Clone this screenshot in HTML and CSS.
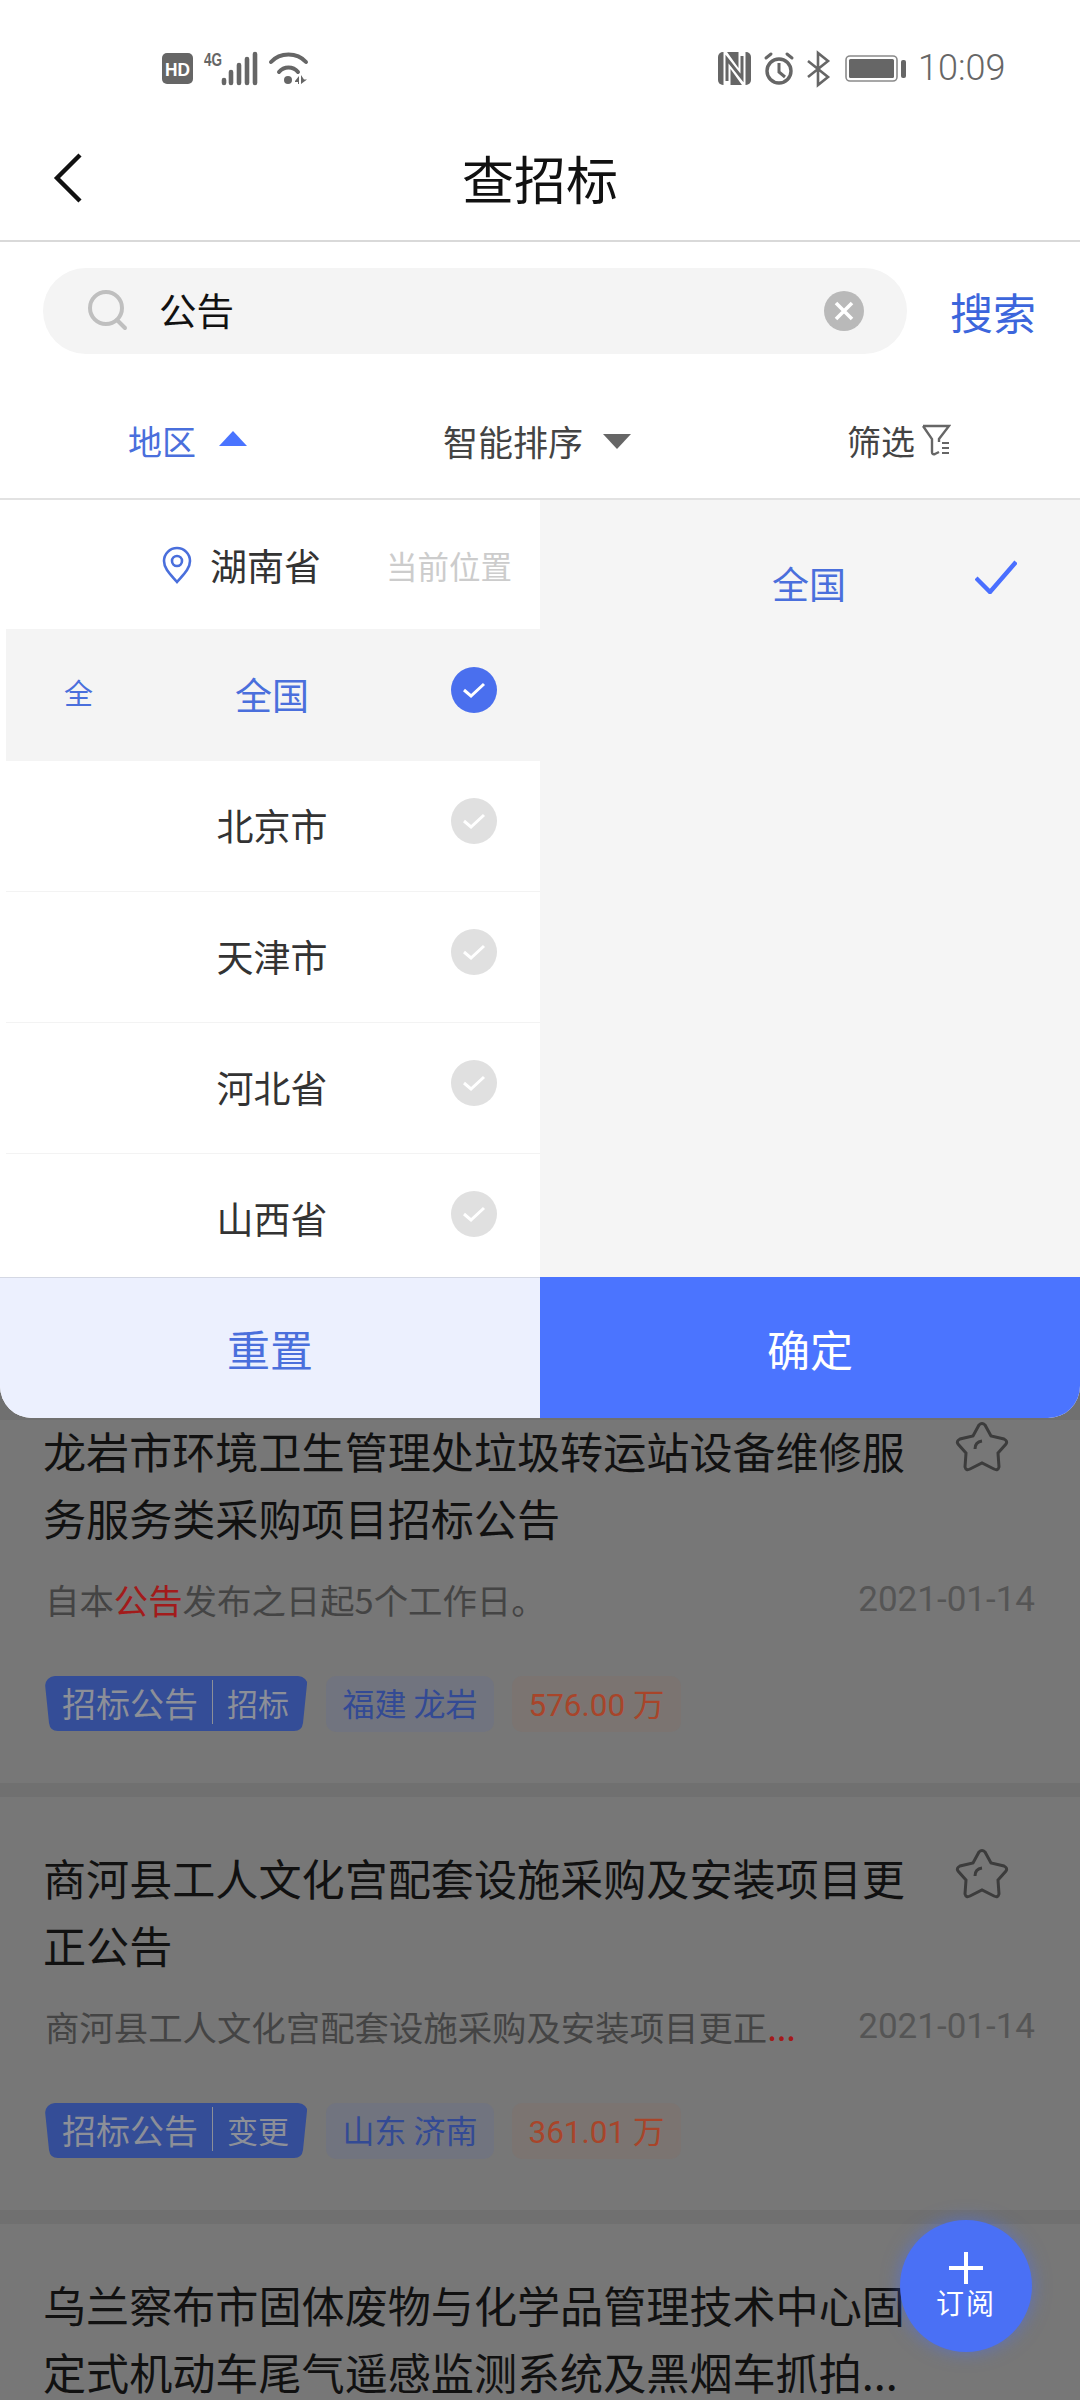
FILE: index.html
```html
<!DOCTYPE html>
<html lang="zh">
<head>
<meta charset="utf-8">
<title>查招标</title>
<link rel="stylesheet" href="styles.css">
</head>
<body>
<div class="page">
  <div class="status">
    <div class="status-group left">
      <svg width="31" height="31" viewBox="0 0 31 31"><rect width="31" height="31" rx="5" fill="#666"/><text x="15.5" y="22.5" text-anchor="middle" class="hd" textLength="25" lengthAdjust="spacingAndGlyphs">HD</text></svg>
      <svg width="54" height="33" viewBox="0 0 54 33"><text x="0" y="14" class="fourg" textLength="18" lengthAdjust="spacingAndGlyphs">4G</text><g stroke="#666" stroke-width="4.6" stroke-linecap="round"><path d="M20 28v3M27 20v11M35 13v18M43 7v24M51 2v29"/></g></svg>
      <svg width="40" height="33" viewBox="0 0 40 33" fill="none"><path d="M2 10C11 0 28 0 37 10M10 20c5-6 14-6 19 0" stroke="#666" stroke-width="4" stroke-linecap="round"/><circle cx="19" cy="28" r="4" fill="#666"/><path d="M26 29l4-5v8h-1v-2h-3zM32 23v9l6-4.500h-3z" fill="#666"/></svg>
    </div>
    <div class="status-group right">
      <svg class="g-nfc" width="33" height="33" viewBox="0 0 33 33"><rect width="33" height="33" rx="5" fill="#666"/><path d="M9 33V6L24 27V0" fill="none" stroke="#fff" stroke-width="7"/><path d="M9 29V7L24 26V4" fill="none" stroke="#666" stroke-width="3"/></svg>
      <svg class="g-alarm" width="32" height="33" viewBox="0 0 32 33" fill="none" stroke="#666"><circle cx="16" cy="19" r="12" stroke-width="3.4"/><path d="M16 11v9l6 5" stroke-width="3"/><path d="M3 6l5-4M29 6l-5-4" stroke-width="3" stroke-linecap="round"/></svg>
      <svg class="g-bt" width="22" height="34" viewBox="0 0 22 34" fill="none" stroke="#666" stroke-width="2.6"><path d="M1 9l20 16-10 8V1l10 8L1 25"/></svg>
      <svg class="g-batt" width="61" height="27" viewBox="0 0 61 27"><rect x="1" y="1" width="51" height="25" rx="4" fill="#fff" stroke="#8a8a8a" stroke-width="1.6"/><rect x="4" y="4" width="45" height="19" rx="1.5" fill="#666"/><rect x="56" y="5" width="5" height="18" rx="2" fill="#666"/></svg>
      <span class="clock">10:09</span>
    </div>
  </div>

  <header class="topbar">
    <svg class="back" width="30" height="50" viewBox="0 0 30 50" fill="none"><path d="M27 2L4 25l23 23" stroke="#111" stroke-width="4.4"/></svg>
    <h1 class="title">查招标</h1>
  </header>

  <div class="searchrow">
    <div class="searchbox">
      <svg class="mag" width="42" height="42" viewBox="0 0 42 42" fill="none" stroke="#bfbfbf" stroke-width="4"><circle cx="19" cy="18" r="16"/><path d="M30 30l8 8" stroke-linecap="round"/></svg>
      <span class="query">公告</span>
      <svg class="clear" width="40" height="40" viewBox="0 0 40 40"><circle cx="20" cy="20" r="20" fill="#b9b9b9"/><path d="M12 12l16 16M28 12L12 28" stroke="#fff" stroke-width="3.6"/></svg>
    </div>
    <span class="searchbtn">搜索</span>
  </div>

  <nav class="tabs">
    <div class="tab active"><span>地区</span><i class="tri up"></i></div>
    <div class="tab sort"><span>智能排序</span><i class="tri down"></i></div>
    <div class="tab filter"><span>筛选</span>
      <svg width="30" height="32" viewBox="0 0 30 32" fill="none" stroke="#666" stroke-width="2.4"><path d="M2 2h26L18 15v3M2 2l9 13v13q0 3 3 2l4-2"/><path d="M21 19h7M21 24h7M21 29h7" stroke-width="2"/></svg>
    </div>
  </nav>

  <main class="body">
    <div class="list">
      <article class="card">
        <div class="card-head"><h2 class="card-title">龙岩市环境卫生管理处垃圾转运站设备维修服务服务类采购项目招标公告</h2>
          <svg class="star" width="56" height="54" viewBox="-2 -2 56 54" fill="none" stroke="#3c3c3c" stroke-width="3"><path d="M23 3Q26 0 29 3L35 14L48 17Q52 19 50 22L42 31L43 45Q42 49 38 47L26 41L14 47Q10 49 9 45L10 31L2 22Q0 19 4 17L17 14Z"/><path d="M19 27Q19 20 26 19"/></svg></div>
        <div class="meta"><p class="summary">自本<em>公告</em>发布之日起5个工作日。</p><time class="date">2021-01-14</time></div>
        <div class="tags"><span class="tag kind"><span class="kind-a">招标公告</span><b></b><span class="kind-b">招标</span></span><span class="tag place">福建 龙岩</span><span class="tag money">576.00 万</span></div>
      </article>
      <article class="card">
        <div class="card-head"><h2 class="card-title">商河县工人文化宫配套设施采购及安装项目更正公告</h2>
          <svg class="star" width="56" height="54" viewBox="-2 -2 56 54" fill="none" stroke="#3c3c3c" stroke-width="3"><path d="M23 3Q26 0 29 3L35 14L48 17Q52 19 50 22L42 31L43 45Q42 49 38 47L26 41L14 47Q10 49 9 45L10 31L2 22Q0 19 4 17L17 14Z"/><path d="M19 27Q19 20 26 19"/></svg></div>
        <div class="meta"><p class="summary">商河县工人文化宫配套设施采购及安装项目更正<em>...</em></p><time class="date">2021-01-14</time></div>
        <div class="tags"><span class="tag kind"><span class="kind-a">招标公告</span><b></b><span class="kind-b">变更</span></span><span class="tag place">山东 济南</span><span class="tag money">361.01 万</span></div>
      </article>
      <article class="card">
        <div class="card-head"><h2 class="card-title">乌兰察布市固体废物与化学品管理技术中心固定式机动车尾气遥感监测系统及黑烟车抓拍...</h2></div>
      </article>
    </div>

    <button class="fab"><svg width="34" height="32" viewBox="0 0 34 32"><path d="M17 0v32M0 16h34" stroke="#fff" stroke-width="4"/></svg><span>订阅</span></button>

    <section class="panel">
      <div class="columns">
        <div class="regions">
          <div class="current">
            <svg width="30" height="38" viewBox="0 0 30 38" fill="none" stroke="#4a6fdc" stroke-width="2.6"><path d="M15 36C9 29 2 23 2 15a13 13 0 0 1 26 0c0 8-7 14-13 21z"/><circle cx="15" cy="15" r="5"/></svg>
            <span class="current-name">湖南省</span><span class="current-note">当前位置</span>
          </div>
          <div class="region on"><span class="letter">全</span><span class="name">全国</span><span class="tick"><svg width="24" height="18" viewBox="0 0 24 18" fill="none"><path d="M2 9l7 6L22 3" stroke="#fff" stroke-width="3"/></svg></span></div>
          <div class="region"><span class="letter"></span><span class="name">北京市</span><span class="tick"><svg width="24" height="18" viewBox="0 0 24 18" fill="none"><path d="M2 9l7 6L22 3" stroke="#fff" stroke-width="3"/></svg></span></div>
          <div class="region"><span class="letter"></span><span class="name">天津市</span><span class="tick"><svg width="24" height="18" viewBox="0 0 24 18" fill="none"><path d="M2 9l7 6L22 3" stroke="#fff" stroke-width="3"/></svg></span></div>
          <div class="region"><span class="letter"></span><span class="name">河北省</span><span class="tick"><svg width="24" height="18" viewBox="0 0 24 18" fill="none"><path d="M2 9l7 6L22 3" stroke="#fff" stroke-width="3"/></svg></span></div>
          <div class="region"><span class="letter"></span><span class="name">山西省</span><span class="tick"><svg width="24" height="18" viewBox="0 0 24 18" fill="none"><path d="M2 9l7 6L22 3" stroke="#fff" stroke-width="3"/></svg></span></div>
        </div>
        <div class="subregions">
          <span class="sub-name">全国</span>
          <svg class="sub-check" width="42" height="34" viewBox="0 0 42 34" fill="none"><path d="M1 18l14 14L41 2" stroke="#4a6fff" stroke-width="4.4"/></svg>
        </div>
      </div>
      <div class="actions"><button class="act reset">重置</button><button class="act ok">确定</button></div>
    </section>
  </main>
</div>
</body>
</html>
```

FILE: styles.css
```css
* { box-sizing: border-box; }
html, body { margin: 0; padding: 0; }
body { width: 1080px; height: 2400px; overflow: hidden; background: #fff; font-family: "Noto Sans CJK SC", "Noto Sans", sans-serif; }
.page { width: 1080px; height: 2400px; display: flex; flex-direction: column; }

.status { height: 116px; flex: none; display: flex; justify-content: space-between; align-items: flex-start; padding: 52px 76px 0 162px; }
.status-group { display: flex; align-items: center; height: 33px; }
.status-group.left { gap: 11px; }
.status-group svg { display: block; flex: none; overflow: visible; }
.hd { font: bold 19px "Liberation Sans", sans-serif; fill: #fff; }
.fourg { font: bold 18px "Liberation Sans", sans-serif; fill: #666; }
.g-nfc { margin-right: 12px; }
.g-alarm { margin-right: 12px; }
.g-bt { margin-right: 16px; }
.g-batt { margin-right: 12px; }
.clock { font: 300 36px/33px Roboto, sans-serif; color: #666; width: 86px; white-space: nowrap; }

.topbar { height: 126px; flex: none; display: flex; align-items: center; justify-content: center; position: relative; border-bottom: 2px solid #d9d9d9; }
.back { position: absolute; left: 53px; top: 37px; }
.title { margin: 0; font-size: 52px; font-weight: 400; color: #111; line-height: 1; }

.searchrow { height: 130px; flex: none; display: flex; align-items: flex-start; padding: 26px 44px 0 43px; justify-content: space-between; }
.searchbox { width: 864px; height: 86px; border-radius: 43px; background: #f4f4f4; display: flex; align-items: center; padding: 0 43px 0 44px; }
.mag { flex: none; }
.query { flex: 1; font-size: 37.5px; color: #111; margin-left: 30px; line-height: 1; position: relative; top: -2px; }
.clear { flex: none; }
.searchbtn { font-size: 43px; color: #3c66dc; line-height: 86px; width: 86px; white-space: nowrap; }

.tabs { height: 128px; flex: none; display: grid; grid-template-columns: 315px 404px auto; padding: 10px 0 0 128px; border-bottom: 2px solid #e2e2e2; }
.tab { display: flex; align-items: center; justify-content: flex-start; font-size: 34px; color: #444; gap: 23px; }
.tab.active { color: #4a6fdc; }
.tab.sort { font-size: 35px; gap: 20px; }
.tab.filter { gap: 6px; }
.tri { display: block; width: 0; height: 0; border-left: 14px solid transparent; border-right: 14px solid transparent; }
.tri.up { border-bottom: 15px solid #4a74ff; margin-top: -4px; }
.tri.down { border-top: 15px solid #666; margin-top: 2px; }

.body { flex: 1; position: relative; overflow: hidden; background: #777; }
.list { padding-top: 920px; display: flex; flex-direction: column; gap: 14px; background: #707070; }
.card { background: #777; padding: 0 0 51px 43px; position: relative; }
.card + .card { padding-top: 50px; }
.card-head { display: flex; align-items: flex-start; gap: 45px; }
.card-title { margin: -3px 0 3px; width: 866px; flex: none; font-size: 43.1px; font-weight: 400; line-height: 67px; color: #111; }
.star { flex: none; margin-top: 0; }
.meta { display: flex; justify-content: space-between; align-items: center; height: 50px; margin-top: 21px; padding: 0 45px 0 2px; }
.summary { margin: 0; font-size: 34.4px; line-height: 50px; color: #444; position: relative; top: -1px; }
.summary em { font-style: normal; color: #a21b1b; }
.date { font: 400 35px/50px Roboto, sans-serif; color: #555; position: relative; }
.tags { display: flex; margin-top: 51px; height: 56px; gap: 18px; }
.tag { display: flex; align-items: center; justify-content: center; font-size: 32px; height: 56px; border-radius: 10px; white-space: nowrap; padding-bottom: 4px; }
.kind { width: 263px; margin-left: 2px; background: #344d97; color: #8c8f98; gap: 14px; justify-content: flex-start; padding-left: 17px; clip-path: path("M8 0H255Q263 0 262 8L258 47Q257 55 249 55H13Q5 55 4 47L0 8Q0 0 8 0Z"); }
.kind-a { font-size: 34px; }
.kind-b { font-size: 31px; }
.kind b { width: 1px; height: 44px; background: #8c8f98; }
.place { width: 168px; background: #71747f; color: #334a94; }
.money { width: 169px; background: #7b7471; color: #a8452a; font-size: 31.5px; font-family: Roboto, "Noto Sans CJK SC", sans-serif; }

.fab { position: absolute; right: 48px; bottom: 48px; width: 132px; height: 132px; border-radius: 50%; border: 0; padding: 0; background: #4a70f5; box-shadow: 0 0 18px rgba(74, 112, 245, .55); color: #fff; display: flex; flex-direction: column; align-items: center; justify-content: flex-start; padding-top: 32px; font: 400 28px/1.2 "Noto Sans CJK SC", sans-serif; letter-spacing: 2px; }
.fab svg { display: block; margin-bottom: 2px; }

.panel { position: absolute; left: 0; top: 0; width: 1080px; height: 918px; display: flex; flex-direction: column; border-radius: 0 0 32px 32px; overflow: hidden; background: #fff; }
.columns { flex: none; height: 777px; display: grid; grid-template-columns: 540px 540px; }
.regions { background: #fff; overflow: hidden; padding-left: 6px; }
.current { height: 129px; display: flex; align-items: center; padding-left: 156px; padding-top: 0; }
.current-name { font-size: 37px; color: #333; margin-left: 18px; }
.current-note { font-size: 31.5px; color: #ccc; margin-left: 65px; white-space: nowrap; }
.region { height: 131px; display: grid; grid-template-columns: 150px 232px 152px; align-items: center; border-bottom: 1px solid #f3f3f3; }
.region.on { background: #f4f4f4; border-bottom: 0; height: 132px; }
.letter { font-size: 29px; color: #4a6fdc; padding-left: 58px; position: relative; top: -3px; }
.name { font-size: 37px; color: #333; text-align: center; position: relative; top: -1px; }
.on .name { color: #4a6fdc; }
.tick { width: 46px; height: 46px; border-radius: 50%; background: #e0e0e0; margin-left: 63px; position: relative; top: -5px; display: flex; align-items: center; justify-content: center; }
.on .tick { background: #4a6fee; }
.subregions { background: #f5f5f5; position: relative; display: flex; align-items: flex-start; padding: 60px 0 0 232px; }
.sub-name { font-size: 37px; color: #4a6fdc; line-height: 46px; }
.sub-check { position: absolute; left: 435px; top: 60px; }
.actions { flex: 1; display: grid; grid-template-columns: 540px 540px; }
.act { border: 0; padding: 0; font: 400 43px "Noto Sans CJK SC", sans-serif; }
.reset { background: #ecf0fe; color: #4a6fdc; border-top: 1px solid #d4d8e4; }
.ok { background: #4b74ff; color: #fff; }
```
